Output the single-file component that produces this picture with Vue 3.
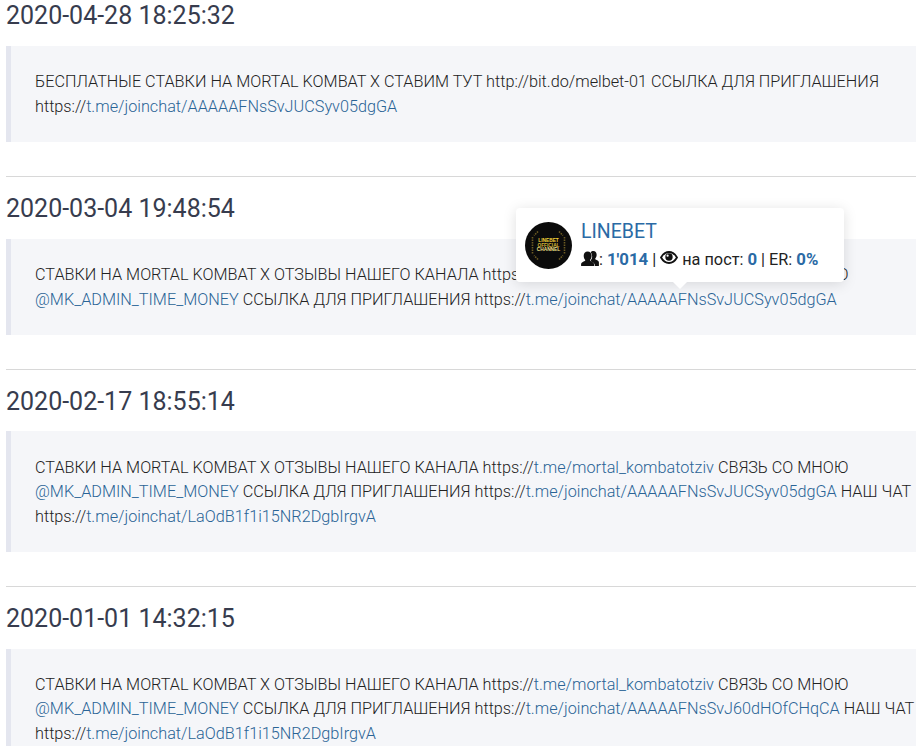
<script setup>
const items = [
  { date: '2020-04-28 18:25:32', parts: [
    ['БЕСПЛАТНЫЕ СТАВКИ НА MORTAL KOMBAT X СТАВИМ ТУТ http://bit.do/melbet-01 ССЫЛКА ДЛЯ ПРИГЛАШЕНИЯ https://'],
    ['t.me/joinchat/AAAAAFNsSvJUCSyv05dgGA', 1] ] },
  { date: '2020-03-04 19:48:54', parts: [
    ['СТАВКИ НА MORTAL KOMBAT X ОТЗЫВЫ НАШЕГО КАНАЛА https://'],
    ['t.me/mortal_kombatotziv', 1], [' СВЯЗЬ СО МНОЮ '],
    ['@MK_ADMIN_TIME_MONEY', 1], [' ССЫЛКА ДЛЯ ПРИГЛАШЕНИЯ https://'],
    ['t.me/joinchat/AAAAAFNsSvJUCSyv05dgGA', 1] ] },
  { date: '2020-02-17 18:55:14', parts: [
    ['СТАВКИ НА MORTAL KOMBAT X ОТЗЫВЫ НАШЕГО КАНАЛА https://'],
    ['t.me/mortal_kombatotziv', 1], [' СВЯЗЬ СО МНОЮ '],
    ['@MK_ADMIN_TIME_MONEY', 1], [' ССЫЛКА ДЛЯ ПРИГЛАШЕНИЯ https://'],
    ['t.me/joinchat/AAAAAFNsSvJUCSyv05dgGA', 1], [' НАШ ЧАТ https://'],
    ['t.me/joinchat/LaOdB1f1i15NR2DgbIrgvA', 1] ] },
  { date: '2020-01-01 14:32:15', parts: [
    ['СТАВКИ НА MORTAL KOMBAT X ОТЗЫВЫ НАШЕГО КАНАЛА https://'],
    ['t.me/mortal_kombatotziv', 1], [' СВЯЗЬ СО МНОЮ '],
    ['@MK_ADMIN_TIME_MONEY', 1], [' ССЫЛКА ДЛЯ ПРИГЛАШЕНИЯ https://'],
    ['t.me/joinchat/AAAAAFNsSvJ60dHOfCHqCA', 1], [' НАШ ЧАТ https://'],
    ['t.me/joinchat/LaOdB1f1i15NR2DgbIrgvA', 1] ] },
]
</script>

<template>
  <div class="page">
    <div class="list">
      <template v-for="(item, i) in items" :key="item.date">
        <hr v-if="i > 0" class="rule" />
        <h3 class="date">{{ item.date }}</h3>
        <blockquote class="quote"><template v-for="(p, j) in item.parts" :key="j"><a v-if="p[1]" class="link">{{ p[0] }}</a><template v-else>{{ p[0] }}</template></template></blockquote>
      </template>
    </div>
    <div class="tip">
      <svg class="avatar" viewBox="0 0 47 47">
        <circle cx="23.5" cy="23.5" r="23.5" fill="#0b0b0b" />
        <path d="M7.500 15v17M39.500 15v17M13 9.500l-4 4M34 9.500l4 4M13 37.500l-4-4M34 37.500l4-4" stroke="#6b5a22" stroke-width="1.6" stroke-dasharray="1.5 1" fill="none" />
        <text x="23.500" y="19.800" class="av1">LINEBET</text>
        <text x="23.500" y="24.600" class="av2">OFFICIAL</text>
        <text x="23.500" y="29.200" class="av3">CHANNEL</text>
      </svg>
      <div class="info">
        <a class="name">LINEBET</a>
        <div class="stats">
          <svg class="ic-users" viewBox="0 0 19 16"><path fill="#111" d="M13 0c2.300 0 3.600 1.700 3.600 3.900 0 1.500-.5 2.800-1.300 3.700-.4.500-.3 1.100.2 1.400 1.300.7 3.500 1.300 3.500 2.900V16h-4.500v-1.500c0-1.400-2.400-2.500-3.900-3.300-.6-.3-.6-1-.2-1.400 1-1.100 1.400-2.400 1.400-3.900 0-2-.8-3.500-1.600-4.200C10.900.3 11.900 0 13 0z"/><path fill="#111" d="M7 .5c2.700 0 4.200 2 4.200 4.500 0 1.700-.6 3.200-1.500 4.200-.4.500-.3 1.200.3 1.500 1.500.8 3.800 1.500 3.800 3.100V16H0v-2.200c0-1.600 2.400-2.300 3.900-3.100.6-.3.700-1 .3-1.500C3.300 8.200 2.800 6.700 2.800 5 2.800 2.500 4.300.5 7 .5z"/></svg><span>: </span><b>1'014</b><span> | </span><svg class="ic-eye" viewBox="0 0 18 13">
            <path fill="#fff" stroke="#111" stroke-width="1.800" d="M1 6.500C3 3 5.800 1 9 1s6 2 8 5.500C15 10 12.200 12 9 12S3 10 1 6.500z"/>
            <circle cx="9" cy="6" r="3.700" fill="#111"/>
            <circle cx="7.600" cy="4.700" r="1.100" fill="#fff"/>
          </svg><span> на пост: </span><b>0</b><span> | ER: </span><b>0%</b>
        </div>
      </div>
    </div>
  </div>
</template>

<style>
html, body { margin: 0; overflow: hidden; background: #fff; }
</style>

<style scoped>
.page {
  position: relative;
  width: 916px;
  height: 746px;
  overflow: hidden;
  font-family: Roboto, "Liberation Sans", sans-serif;
  background: #fff;
}
.list {
  width: 943px;
  margin-left: 6px;
}
.date {
  margin: 0 0 14.9px;
  font-size: 25px;
  line-height: 31px;
  font-weight: 400;
  color: #373c4e;
}
.quote {
  margin: 0;
  padding: 24.5px 24px 22.9px;
  border-left: 5px solid #e4e6ef;
  background: #f5f6f9;
  font-size: 16.24px;
  line-height: 24.375px;
  font-weight: 300;
  color: #222;
}
.link { color: #2a6496; }
.rule {
  margin: 34px 0 15.72px;
  width: 943px;
  border: 0;
  border-top: 1px solid #d8d8d8;
}
.tip {
  position: absolute;
  left: 516px;
  top: 208px;
  width: 328px;
  height: 74px;
  box-sizing: border-box;
  padding: 14px 9px;
  display: flex;
  gap: 9px;
  background: #fff;
  border-radius: 4px;
  box-shadow: 0 2px 14px rgba(0, 0, 0, 0.13);
}
.tip::after {
  content: "";
  position: absolute;
  left: 157px;
  bottom: -7px;
  border-left: 7px solid transparent;
  border-right: 7px solid transparent;
  border-top: 7px solid #fff;
}
.avatar { width: 47px; height: 47px; flex: none; }
.av1, .av2, .av3 {
  font-family: "Liberation Sans", sans-serif;
  font-size: 4.800px;
  font-weight: 700;
  text-anchor: middle;
}
.av1 { fill: #f3d53a; }
.av2 { fill: #d8b836; }
.av3 { fill: #f0e08a; }
.info { min-width: 0; }
.name {
  display: block;
  font-size: 19.5px;
  line-height: 20px;
  color: #2a6aa5;
}
.stats {
  display: flex;
  align-items: center;
  white-space: pre;
  margin-top: 7px;
  height: 20px;
  font-size: 16.25px;
  color: #222;
}
.stats b { color: #2a6aa5; font-weight: 700; font-size: 16.8px; }
.ic-users { width: 18px; height: 15px; margin-top: -2px; }
.ic-eye { width: 18px; height: 13px; margin-top: -3px; }
</style>
